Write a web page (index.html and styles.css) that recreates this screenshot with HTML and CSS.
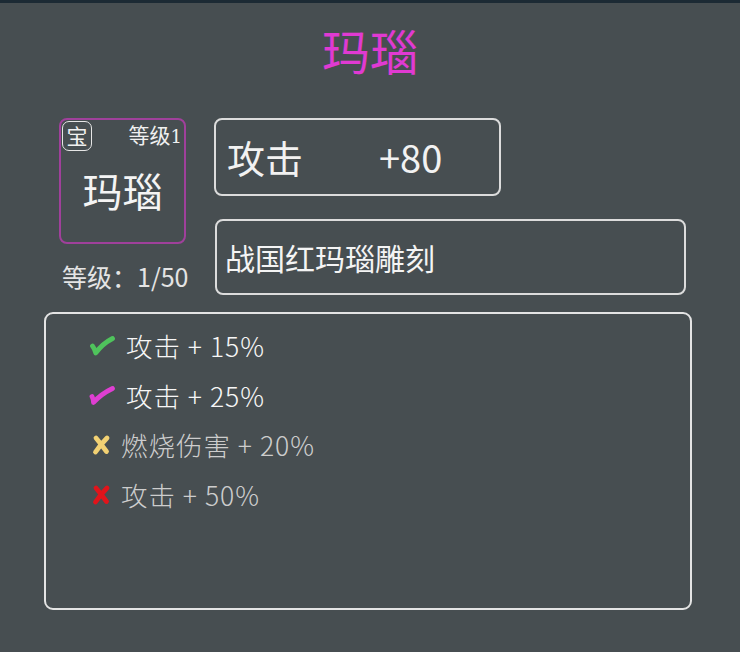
FILE: index.html
```html
<!DOCTYPE html>
<html lang="zh">
<head>
<meta charset="utf-8">
<link rel="stylesheet" href="styles.css">
</head>
<body>
<div class="topband"></div>
<div class="page">
  <h1 class="title">玛瑙</h1>
  <div class="top">
    <div class="left">
      <div class="card">
        <div class="card-head">
          <span class="badge">宝</span>
          <span class="lvl">等级<span class="lvl-num">1</span></span>
        </div>
        <div class="card-name">玛瑙</div>
      </div>
      <div class="level">等级：1/50</div>
    </div>
    <div class="right">
      <div class="stat">
        <span class="stat-name">攻击</span>
        <span class="stat-val">+80</span>
      </div>
      <div class="desc">战国红玛瑙雕刻</div>
    </div>
  </div>
  <div class="effects">
    <div class="row">
      <svg class="ico" viewBox="0 0 26 22"><path d="M3.5 11 Q5.5 13.5 6.8 18 Q13 9 23.5 3.5" fill="none" stroke="#4fc35c" stroke-width="4.8" stroke-linecap="round" stroke-linejoin="round"/></svg>
      <span class="txt">攻击 + 15%</span>
    </div>
    <div class="row">
      <svg class="ico" viewBox="0 0 26 22"><path d="M3 12.5 Q4.5 15 4.5 18.5 Q12 10 23.5 4.5" fill="none" stroke="#df3fd2" stroke-width="4.8" stroke-linecap="round" stroke-linejoin="round"/></svg>
      <span class="txt">攻击 + 25%</span>
    </div>
    <div class="row off">
      <svg class="ico" viewBox="0 0 26 22"><path d="M7 4 Q12 10 17.5 17.5 M18 4 Q12 10 6.5 18" fill="none" stroke="#f2d173" stroke-width="4.8" stroke-linecap="round"/></svg>
      <span class="txt">燃烧伤害 + 20%</span>
    </div>
    <div class="row off">
      <svg class="ico" viewBox="0 0 26 22"><path d="M7 4 Q12 10 17.5 17.5 M18 4 Q12 10 6.5 18" fill="none" stroke="#e1141b" stroke-width="4.8" stroke-linecap="round"/></svg>
      <span class="txt">攻击 + 50%</span>
    </div>
  </div>
</div>
</body>
</html>
```

FILE: styles.css
```css
html, body {
  margin: 0;
  padding: 0;
  background: #474e51;
}
*, *::before, *::after {
  box-sizing: border-box;
}
body {
  width: 740px;
  height: 652px;
  overflow: hidden;
  font-family: "Noto Sans CJK SC", "Noto Sans", sans-serif;
  color: #f2f2f2;
}
.topband {
  height: 3px;
  background: #1c2a34;
}
.page {
  padding: 22px 0 0 0;
}
.title {
  margin: 0;
  text-align: center;
  font-size: 48px;
  line-height: 48px;
  font-weight: 400;
  color: #e03ad2;
}
.top {
  display: flex;
  margin: 45px 0 0 59px;
}
.left {
  width: 130px;
  display: flex;
  flex-direction: column;
}
.card {
  width: 127px;
  height: 126px;
  border: 2px solid #a0409b;
  border-radius: 8px;
  display: flex;
  flex-direction: column;
}
.card-head {
  display: flex;
  justify-content: space-between;
  align-items: flex-start;
  padding: 1px 1px 0 1px;
}
.badge {
  width: 30px;
  height: 30px;
  border: 1.5px solid #e6e6e6;
  border-radius: 7px;
  font-size: 21px;
  line-height: 27px;
  text-align: center;
  color: #f0f0f0;
}
.lvl {
  font-size: 21px;
  line-height: 26px;
  color: #f0f0f0;
  margin-right: 1px;
}
.lvl-num {
  font-family: "DejaVu Serif", "Liberation Serif", serif;
  font-size: 18px;
}
.card-name {
  text-align: center;
  font-size: 40px;
  line-height: 48px;
  margin-top: 15px;
  color: #f4f4f4;
}
.level {
  margin: 16px 0 0 3px;
  font-size: 25px;
  line-height: 32px;
  color: #e4e4e4;
  white-space: nowrap;
}
.right {
  margin-left: 25px;
  display: flex;
  flex-direction: column;
  gap: 23px;
}
.stat {
  width: 287px;
  height: 78px;
  border: 2px solid #dcdcdc;
  border-radius: 8px;
  display: flex;
  align-items: center;
  padding-left: 11px;
}
.stat-name {
  font-size: 38px;
  width: 152px;
  line-height: 48px;
}
.stat-val {
  font-size: 38px;
  line-height: 48px;
}
.desc {
  width: 471px;
  height: 76px;
  margin-left: 1px;
  border: 2px solid #dcdcdc;
  border-radius: 8px;
  display: flex;
  align-items: center;
  padding-left: 8px;
  font-size: 30px;
  color: #f4f4f4;
}
.effects {
  margin: 17px 0 0 44px;
  border: 2px solid #e4e4e4;
  border-radius: 9px;
  padding: 7px 0 0 43px;
  width: 648px;
  height: 298px;
}
.row {
  display: flex;
  align-items: center;
  height: 49.6px;
}
.ico {
  width: 26px;
  height: 22px;
  flex: none;
}
.txt {
  margin-left: 11px;
  font-size: 26.5px;
  letter-spacing: 1px;
  font-weight: 300;
  color: #f7f7f7;
  white-space: nowrap;
}
.row.off .txt {
  margin-left: 6px;
  color: #cdcdcd;
}
```
